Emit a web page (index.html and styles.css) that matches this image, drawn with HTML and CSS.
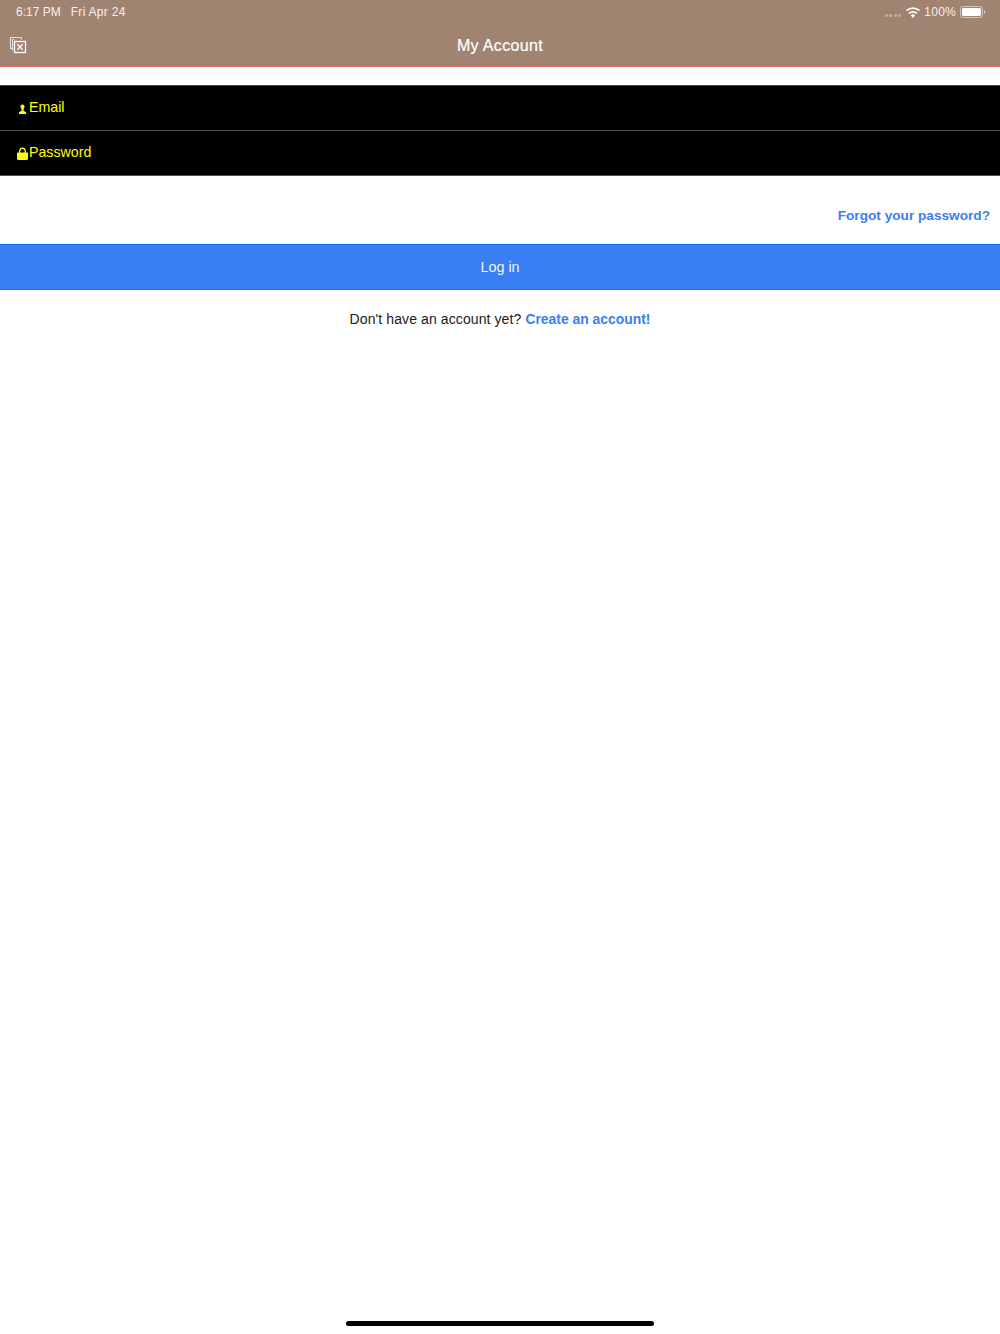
FILE: index.html
```html
<!DOCTYPE html>
<html lang="en">
<head>
<meta charset="utf-8">
<title>My Account</title>
<link rel="stylesheet" href="styles.css">
</head>
<body>
<div class="app">
  <header class="header">
    <div class="status">
      <div class="status-left"><span>6:17 PM</span><span class="date">Fri Apr 24</span></div>
      <div class="status-right">
        <span class="signal"><i></i><i></i><i></i><i></i></span>
        <svg class="wifi" width="14" height="11" viewBox="0 0 14 11"><path fill="#fff" d="M7 11 4.800 8.400a3.200 3.200 0 0 1 4.400 0L7 11ZM3.600 7.100 2.400 5.700a7 7 0 0 1 9.200 0l-1.200 1.400a5.200 5.200 0 0 0-6.800 0ZM1.200 4.300 0 2.900a10.600 10.600 0 0 1 14 0l-1.200 1.400a8.800 8.800 0 0 0-11.600 0Z"/></svg>
        <span class="pct">100%</span>
        <svg class="battery" width="26" height="12" viewBox="0 0 26 12"><rect x=".5" y=".5" width="22" height="11" rx="3" fill="none" stroke="#fff" stroke-opacity=".55"/><rect x="2" y="2" width="19" height="8" rx="1.600" fill="#fff"/><path d="M24 4.200c.8.200 1.200.9 1.200 1.800s-.4 1.600-1.200 1.800Z" fill="#fff" fill-opacity=".6"/></svg>
      </div>
    </div>
    <div class="nav">
      <svg class="close-icon" width="18" height="18" viewBox="0 0 18 18" fill="none" stroke="#fff"><path d="M12.500 3.500V1.500H1.500V12.500H3.500" stroke-opacity=".75"/><path d="M3.500 14.500V3.500H5" stroke-opacity=".75"/><rect x="5.500" y="5.500" width="11" height="11" stroke-width="1.300"/><path d="m8.300 8.200 5.400 5.600m0-5.600-5.400 5.600" stroke-width="1.300"/></svg>
      <h1 class="title">My Account</h1>
    </div>
  </header>
  <main class="main">
    <div class="fields">
      <div class="field">
        <svg class="field-icon" width="12" height="14" viewBox="0 0 12 14"><path fill="#ff0" d="M5.500 2.500c1.300 0 2 .9 2 2.200 0 1-.4 1.800-.9 2.300v2c.6.400 1.900.5 2.500.9V12H2V9.900c.6-.4 1.900-.5 2.500-.9V7c-.6-.5-1-1.300-1-2.300C3.500 3.400 4.200 2.500 5.500 2.500Z"/></svg>
        <span>Email</span>
      </div>
      <div class="field">
        <svg class="field-icon" width="12" height="14" viewBox="0 0 12 14"><path fill="#ff0" d="M1 5.500h1V4.300C2 1.900 3.600.5 5.500.5s3.500 1.400 3.500 3.800v1.200h1c.6 0 1 .4 1 1v5.300c0 .7-.4 1.200-1 1.200H1c-.6 0-1-.5-1-1.200V6.500c0-.6.4-1 1-1Zm2.300 0h4.400V4.300c0-1.500-.8-2.400-2.200-2.400s-2.200.9-2.200 2.400v1.200Z"/></svg>
        <span>Password</span>
      </div>
    </div>
    <div class="forgot"><a class="link link-forgot" href="#">Forgot your password?</a></div>
    <button class="login" type="button">Log in</button>
    <p class="signup">Don't have an account yet? <a class="link" href="#">Create an account!</a></p>
  </main>
  <div class="home-indicator"></div>
</div>
</body>
</html>
```
FILE: styles.css
```css
* { box-sizing: border-box; }
html, body { margin: 0; padding: 0; }
body {
  background: #fff;
  font-family: "Liberation Sans", Arial, sans-serif;
  color: #1a1a1a;
}
.app {
  width: 1000px;
  height: 1334px;
  display: flex;
  flex-direction: column;
  overflow: hidden;
}
.header {
  height: 67px;
  background: #a18372;
  border-bottom: 1px solid #dc6f70;
  color: #fff;
  flex: none;
}
.status {
  height: 24px;
  padding: 0 14px 0 16px;
  display: flex;
  justify-content: space-between;
  align-items: center;
  font-size: 12px;
  color: #f6f1ee;
}
.status-left { display: flex; gap: 10px; }
.date { letter-spacing: .3px; }
.status-right { display: flex; align-items: center; }
.signal { display: flex; gap: 1.600px; margin: 6px 5px 0 0; }
.signal i { width: 3px; height: 3px; border-radius: 50%; background: #c3b0a5; }
.wifi { margin-right: 4px; }
.pct { margin-right: 4px; letter-spacing: .25px; }
.nav {
  height: 42px;
  position: relative;
  display: flex;
  align-items: center;
  justify-content: center;
  padding-top: 2px;
}
.close-icon { position: absolute; left: 9px; top: 12px; }
.title { margin: 0; font-size: 16px; font-weight: 400; line-height: 20px; letter-spacing: .35px; -webkit-text-stroke: .2px #fff; }
.main { flex: 1; padding-top: 18px; }
.fields { background: #000; color: #ff0; font-size: 14.200px; border-bottom: 1px solid #555; }
.field {
  height: 45px;
  display: flex;
  align-items: flex-start;
  padding: 13px 0 0 17px;
  border-top: 1px solid #444;
}
.field + .field { border-top: 1px solid #555; }
.field span { line-height: 17px; }
.field-icon { flex: none; margin-top: 3px; }
.forgot {
  height: 68px;
  padding: 31px 10px 0 0;
  text-align: right;
  font-size: 14px;
  line-height: 17px;
}
.link { color: #3a7ff2; font-weight: 700; text-decoration: none; }
.link-forgot { font-size: 13.650px; }
.login {
  display: block;
  width: 100%;
  height: 46px;
  padding: 0;
  background: #3a7ef4;
  border: 0;
  border-top: 1px solid #1d6bf0;
  border-bottom: 1px solid #1d6bf0;
  color: #f2f6ff;
  font: 14.400px "Liberation Sans", Arial, sans-serif;
}
.signup {
  margin: 21px 0 0;
  text-align: center;
  font-size: 14px;
  line-height: 17px;
  letter-spacing: .1px;
}
.signup .link { letter-spacing: 0; font-size: 13.900px; }
.home-indicator {
  flex: none;
  align-self: center;
  width: 308px;
  height: 5px;
  margin-bottom: 8px;
  background: #000;
  border-radius: 3px;
}
```
